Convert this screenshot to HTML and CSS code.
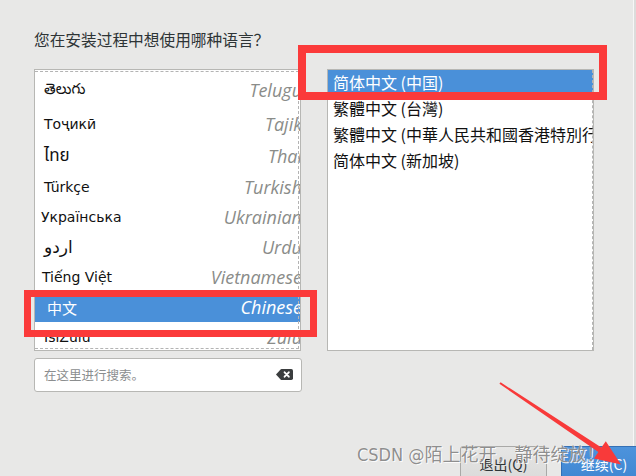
FILE: index.html
```html
<!DOCTYPE html>
<html lang="zh-CN">
<head>
<meta charset="utf-8">
<title>语言选择</title>
<link rel="stylesheet" href="styles.css">
</head>
<body>
<div class="window">
  <div class="title">欢迎使用 CENTOS 7。</div>
  <div class="content">
    <div class="question">您在安装过程中想使用哪种语言？</div>
    <div class="panes">
      <div class="left-col">
        <div class="list lang-list">
          <div class="rows">
            <div class="row partial"><span class="native">தமிழ்</span><span class="english">Tamil</span></div>
            <div class="row h34"><span class="native big15">తెలుగు</span><span class="english">Telugu</span></div>
            <div class="row h33"><span class="native">Тоҷикӣ</span><span class="english">Tajik</span></div>
            <div class="row h32"><span class="native big17">ไทย</span><span class="english">Thai</span></div>
            <div class="row"><span class="native">Türkçe</span><span class="english">Turkish</span></div>
            <div class="row"><span class="native shift3">Українська</span><span class="english">Ukrainian</span></div>
            <div class="row"><span class="native big17">اردو</span><span class="english">Urdu</span></div>
            <div class="row"><span class="native shift2">Tiếng Việt</span><span class="english">Vietnamese</span></div>
            <div class="row selected"><span class="native cjk">中文</span><span class="english">Chinese</span></div>
            <div class="row"><span class="native">IsiZulu</span><span class="english">Zulu</span></div>
          </div>
        </div>
        <div class="search">
          <span class="placeholder">在这里进行搜索。</span>
          <svg class="clear-icon" width="17" height="11" viewBox="0 0 17 11">
            <path d="M0 5.5 L4.8 0.3 Q5.1 0 5.6 0 L15.3 0 Q17 0 17 1.7 L17 9.3 Q17 11 15.3 11 L5.6 11 Q5.1 11 4.8 10.7 Z" fill="#3a3d3e"/>
            <path d="M8.6 3.3 L12.8 7.7 M12.8 3.3 L8.6 7.7" stroke="#ffffff" stroke-width="1.9" stroke-linecap="round"/>
          </svg>
        </div>
      </div>
      <div class="list locale-list">
        <div class="locale-row selected">简体中文 (中国)</div>
        <div class="locale-row">繁體中文 (台灣)</div>
        <div class="locale-row">繁體中文 (中華人民共和國香港特別行政區)</div>
        <div class="locale-row">简体中文 (新加坡)</div>
      </div>
    </div>
  </div>
  <div class="footer">
    <div class="btn quit">退出(Q)</div>
    <div class="btn continue">继续(C)</div>
  </div>

  <div class="mark mark-locale"></div>
  <div class="mark mark-lang"></div>
  <div class="watermark">CSDN @陌上花开，静待绽放！</div>
  <svg class="arrow" width="636" height="476" viewBox="0 0 636 476">
    <polygon points="500.6,382.3 601.4,447.6 605.8,441.2 621,464.5 594,458.6 598.4,452.1 499.4,383.7" fill="#f83a3a"/>
  </svg>
</div>
</body>
</html>
```

FILE: styles.css
```css
html, body {
  margin: 0;
  padding: 0;
}

body {
  width: 636px;
  height: 476px;
  overflow: hidden;
  background: #dcdcdb;
  font-family: "DejaVu Sans", "Noto Sans CJK SC", sans-serif;
  color: #1c1c1c;
}

.window {
  position: relative;
  display: flex;
  flex-direction: column;
  width: 633px;
  height: 476px;
  background: #e8e8e7;
  border-right: 1px solid #f7f7f7;
}

.title {
  font-family: "Noto Sans CJK SC", sans-serif;
  font-size: 20px;
  line-height: 24px;
  height: 24px;
  margin-top: -22px;
  padding-left: 30px;
  color: #3a3d3e;
}

.content {
  padding-left: 34px;
}

.question {
  margin-top: 28px;
  font-family: "Noto Sans CJK SC", sans-serif;
  font-size: 15.7px;
  line-height: 20px;
  color: #2e3436;
}

.panes {
  display: flex;
  gap: 25px;
  margin-top: 19px;
}

.left-col {
  display: flex;
  flex-direction: column;
  gap: 7px;
}

.list {
  position: relative;
  box-sizing: border-box;
  width: 267px;
  height: 282px;
  background: #ffffff;
  border: 1px solid #b7b7b4;
  overflow: hidden;
}

.lang-list::after {
  content: "";
  position: absolute;
  left: 0;
  right: 1px;
  top: 1px;
  bottom: 1px;
  border-top: 1px dashed #b4b4b4;
  border-right: 1px dashed #b4b4b4;
  border-bottom: 1px dashed #b4b4b4;
  pointer-events: none;
}

.locale-list::after {
  content: "";
  position: absolute;
  right: 0;
  top: 0;
  bottom: 0;
  border-right: 1px dashed #b4b4b4;
  pointer-events: none;
}

.rows {
  width: 272px;
}

.row {
  box-sizing: border-box;
  display: flex;
  align-items: center;
  justify-content: space-between;
  height: 30px;
  padding: 0 5px 0 9px;
  white-space: nowrap;
}

.row.partial {
  margin-top: -27px;
}

.row.h34 { height: 34px; }
.row.h33 { height: 33px; }
.row.h32 { height: 32px; }

.native {
  font-family: "DejaVu Sans", "Noto Sans Telugu", "Noto Sans Thai", "Noto Sans Tamil", "Noto Sans CJK SC", sans-serif;
  font-size: 14px;
  color: #111111;
}

.native.big15 { font-size: 15px; }
.native.big17 { font-size: 17px; }

.native.cjk {
  font-family: "Noto Sans CJK SC", sans-serif;
  font-size: 15px;
  padding-left: 3px;
}

.native.shift3 { margin-left: -3px; }
.native.shift2 { margin-left: -2px; }

.english {
  font-family: "Open Sans", "DejaVu Sans", sans-serif;
  font-style: italic;
  font-size: 18px;
  color: #8a8c89;
}

.row.selected {
  background: #4a90d9;
}

.row.selected .native,
.row.selected .english {
  color: #ffffff;
}

.search {
  box-sizing: border-box;
  display: flex;
  align-items: center;
  justify-content: space-between;
  width: 268px;
  height: 34px;
  padding: 0 8px 1px 9px;
  background: #ffffff;
  border: 1px solid #b7b7b4;
  border-radius: 3px;
}

.placeholder {
  font-family: "Noto Sans CJK SC", sans-serif;
  font-size: 12.5px;
  color: #8b8e8f;
}

.clear-icon {
  display: block;
}

.locale-row {
  box-sizing: border-box;
  height: 26px;
  padding: 0 0 2px 5px;
  font-family: "Noto Sans CJK SC", sans-serif;
  font-size: 16px;
  line-height: 24px;
  color: #111111;
  white-space: nowrap;
}

.locale-row.selected {
  background: #4a90d9;
  color: #ffffff;
}

.footer {
  display: flex;
  gap: 14px;
  margin-top: 54px;
  padding-left: 460px;
}

.btn {
  box-sizing: border-box;
  flex: none;
  height: 36px;
  display: flex;
  align-items: center;
  justify-content: center;
  font-family: "Noto Sans CJK SC", sans-serif;
  font-size: 14px;
  border-radius: 3px;
}

.btn.quit {
  width: 87px;
  background: linear-gradient(#e6e6e5, #dadad9);
  border: 1px solid #a9a9a7;
  color: #2e3436;
}

.btn.continue {
  width: 86px;
  background: linear-gradient(#4d93dc, #3f86d1);
  border: 1px solid #3470b5;
  color: #ffffff;
}

.mark {
  position: absolute;
  box-sizing: border-box;
  border: 8px solid #fb3a3a;
  pointer-events: none;
}

.mark-locale {
  left: 298px;
  top: 45px;
  width: 309px;
  height: 55px;
}

.mark-lang {
  left: 24px;
  top: 290px;
  width: 293px;
  height: 47px;
  border-width: 7px;
}

.watermark {
  position: absolute;
  left: 357px;
  top: 444px;
  font-family: "DejaVu Sans Condensed", "DejaVu Sans", "Noto Sans CJK SC", sans-serif;
  font-stretch: condensed;
  font-size: 18px;
  line-height: 22px;
  white-space: nowrap;
  color: rgba(112, 112, 112, 0.8);
  text-shadow: 0 0 1px #ffffff, 1px 1px 0 rgba(255, 255, 255, 0.85);
  pointer-events: none;
}

.arrow {
  position: absolute;
  left: 0;
  top: 0;
  pointer-events: none;
}
```
